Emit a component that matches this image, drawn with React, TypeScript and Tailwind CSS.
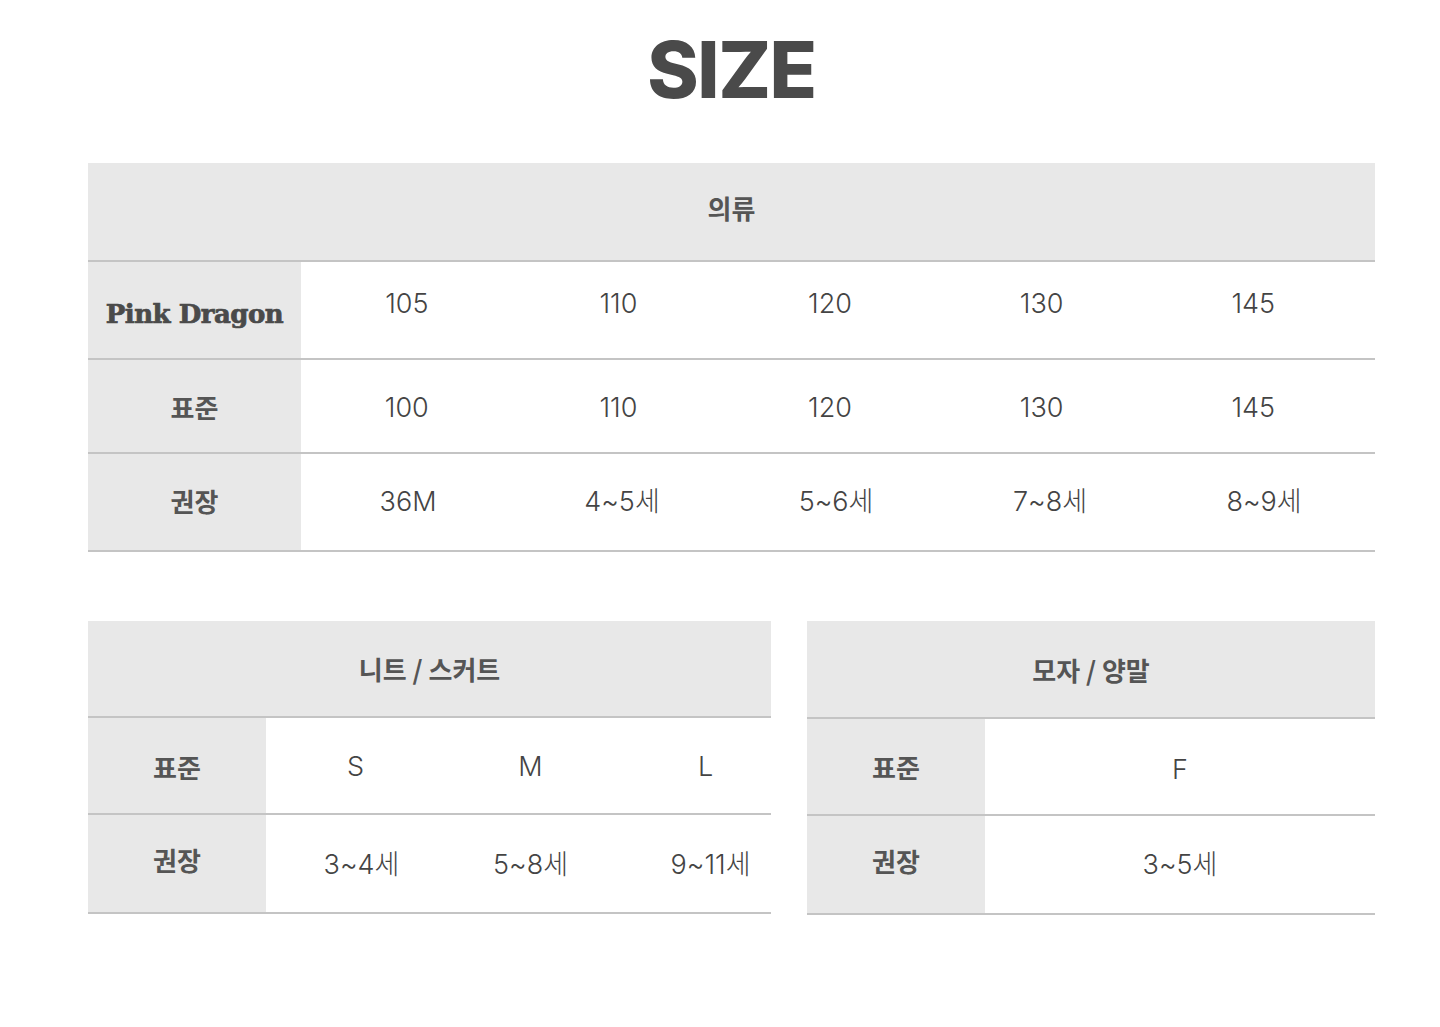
const ko = "font-['Noto_Sans_CJK_KR','Noto_Sans',sans-serif]";
const num = "font-['Inter','Noto_Sans_CJK_KR',sans-serif] font-light";

const clothing = {
  pink: ["105", "110", "120", "130", "145"],
  std: ["100", "110", "120", "130", "145"],
  age: ["36M", "4~5세", "5~6세", "7~8세", "8~9세"],
};

function Label({ children, className = "" }: { children: React.ReactNode; className?: string }) {
  return (
    <div className={`flex items-center justify-center bg-[#e8e8e8] text-[26px] font-bold text-[#555] ${ko} ${className}`}>
      {children}
    </div>
  );
}

function Header({ title, className = "" }: { title: string; className?: string }) {
  return (
    <div className={`flex items-center justify-center border-b-2 border-[#c4c4c4] bg-[#e8e8e8] text-[26px] font-bold text-[#555] ${ko} ${className}`}>
      {title}
    </div>
  );
}

export default function App() {
  return (
    <div className="min-h-[1027px] bg-white pl-[88px] pr-[65px] pt-[31px] text-[#4a4a4a]">
      <h1 className="text-center font-['Inter',sans-serif] text-[78px] font-extrabold leading-none tracking-[-1.5px] text-[#4a4a4a]">
        SIZE
      </h1>

      {/* 의류 */}
      <div className="mt-[54px]">
        <Header title="의류" className="h-[99px] pb-[8px]" />
        <div className="grid h-[98px] grid-cols-[213px_1fr] border-b-2 border-[#c4c4c4]">
          <div className="flex items-center justify-center bg-[#e8e8e8] pt-2 font-['DejaVu_Serif',serif] text-[26px] font-bold tracking-[-0.5px] text-[#4a4a4a] [-webkit-text-stroke:0.7px_#4a4a4a]">
            Pink Dragon
          </div>
          <div className={`grid grid-cols-5 pr-[16px] pb-3 text-[27px] text-[#444] ${num}`}>
            {clothing.pink.map((v) => (
              <div key={v} className="flex items-center justify-center">{v}</div>
            ))}
          </div>
        </div>
        <div className="grid h-[94px] grid-cols-[213px_1fr] border-b-2 border-[#c4c4c4]">
          <Label>표준</Label>
          <div className={`grid grid-cols-5 pr-[16px] pt-[4px] text-[27px] text-[#444] ${num}`}>
            {clothing.std.map((v, i) => (
              <div key={i} className="flex items-center justify-center">{v}</div>
            ))}
          </div>
        </div>
        <div className="grid h-[98px] grid-cols-[213px_1fr] border-b-2 border-[#c4c4c4]">
          <Label className="pb-[4px]">권장</Label>
          <div className={`grid grid-cols-5 pr-[4px] text-[27px] text-[#444] ${num}`}>
            {clothing.age.map((v) => (
              <div key={v} className="flex items-center justify-center">{v}</div>
            ))}
          </div>
        </div>
      </div>

      <div className="mt-[69px] flex gap-[36px]">
        {/* 니트 / 스커트 */}
        <div className="w-[683px]">
          <Header title="니트 / 스커트" className="h-[97px]" />
          <div className="grid h-[97px] grid-cols-[178px_1fr] border-b-2 border-[#c4c4c4]">
            <Label className="pt-[2px]">표준</Label>
            <div className={`grid grid-cols-[175px_175px_175px] pl-[2px] pt-[4px] text-[27px] text-[#444] ${num}`}>
              {["S", "M", "L"].map((v) => (
                <div key={v} className="flex items-center justify-center">{v}</div>
              ))}
            </div>
          </div>
          <div className="grid h-[99px] grid-cols-[178px_1fr] border-b-2 border-[#c4c4c4]">
            <Label className="pb-[8px]">권장</Label>
            <div className={`grid grid-cols-[175px_175px_175px] pl-[2px] pt-[4px] text-[27px] text-[#444] ${num}`}>
              <div className="flex items-center justify-center pl-[12px]">3~4세</div>
              <div className="flex items-center justify-center">5~8세</div>
              <div className="flex items-center justify-center pl-[10px]">9~11세</div>
            </div>
          </div>
        </div>

        {/* 모자 / 양말 */}
        <div className="flex-1">
          <Header title="모자 / 양말" className="h-[98px]" />
          <div className="grid h-[97px] grid-cols-[178px_1fr] border-b-2 border-[#c4c4c4]">
            <Label>표준</Label>
            <div className={`flex items-center justify-center pt-[8px] text-[27px] text-[#444] ${num}`}>F</div>
          </div>
          <div className="grid h-[99px] grid-cols-[178px_1fr] border-b-2 border-[#c4c4c4]">
            <Label className="pb-[8px]">권장</Label>
            <div className={`flex items-center justify-center pt-[2px] text-[27px] text-[#444] ${num}`}>3~5세</div>
          </div>
        </div>
      </div>
    </div>
  );
}
